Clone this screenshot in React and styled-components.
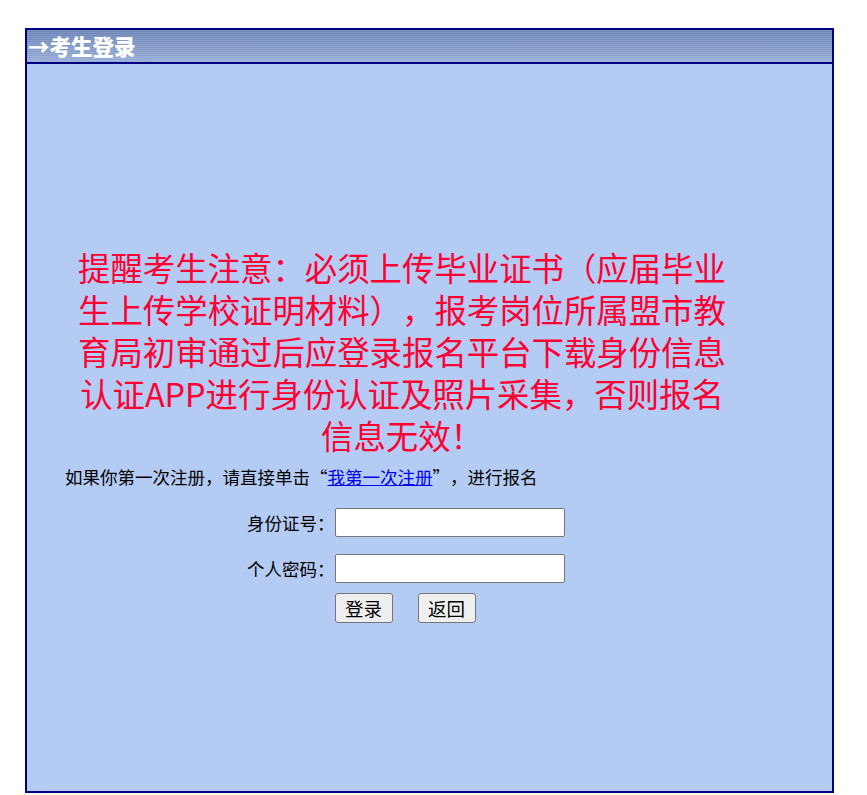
import React from 'react';
import styled, { createGlobalStyle } from 'styled-components';

const GlobalStyle = createGlobalStyle`
  html, body {
    margin: 0;
    padding: 0;
    background: #fff;
  }
  body {
    font-family: "Microsoft YaHei", "Noto Sans CJK SC", "Noto Sans", sans-serif;
    font-size: 17.5px;
    color: #000;
    text-spacing-trim: space-all;
  }
`;

const Page = styled.div`
  padding: 28px 0 0 25px;
`;

const Frame = styled.div`
  width: 809px;
  height: 765px;
  box-sizing: border-box;
  border: 2px solid #000080;
  display: flex;
  flex-direction: column;
  background: #b4cbf4;
`;

const Header = styled.div`
  height: 32px;
  border-bottom: 2px solid #000080;
  display: flex;
  align-items: center;
  padding-left: 1px;
  background:
    repeating-linear-gradient(
      to bottom,
      rgba(255, 255, 255, 0.08) 0px,
      rgba(255, 255, 255, 0.08) 1px,
      rgba(0, 0, 0, 0.04) 1px,
      rgba(0, 0, 0, 0.04) 2px
    ),
    linear-gradient(to bottom, #7089bb 0%, #8aa0cf 60%, #9db2dd 100%);
`;

const Title = styled.h1`
  margin: 0;
  font-size: 21.5px;
  font-weight: 900;
  color: #fff;
  line-height: 32px;
`;

const Body = styled.div`
  flex: 1;
  padding: 182px 0 0 38px;
`;

const Column = styled.div`
  width: 674px;
  display: flex;
  flex-direction: column;
`;

const Notice = styled.div`
  padding: 0 7px;
  font-size: 32.4px;
  line-height: 42px;
  color: #ff0033;
  text-align: center;
  word-break: break-all;
  text-spacing-trim: space-all;
`;

const Hint = styled.p`
  margin: 9px 0 0;
  font-size: 17.5px;
  line-height: 24px;
  font-feature-settings: "fwid";
  text-spacing-trim: space-all;
`;

const Link = styled.a`
  color: #0000ee;
  text-decoration: underline;
  cursor: pointer;
`;

const Form = styled.form`
  margin-top: 19px;
  padding-left: 7px;
  display: grid;
  grid-template-columns: 88px 230px;
  row-gap: 17px;
  justify-content: center;
  align-items: center;
`;

const Label = styled.label`
  text-align: right;
  white-space: nowrap;
  font-size: 17.5px;
  font-feature-settings: "fwid";
`;

const Input = styled.input`
  box-sizing: border-box;
  width: 230px;
  height: 29px;
  margin: 0;
  border: 1px solid #767676;
  border-radius: 2px;
  background: #fff;
  font-size: 16px;
  padding: 0 4px;
`;

const Actions = styled.div`
  grid-column: 2;
  margin-top: -7px;
  display: flex;
  gap: 25px;
`;

const Button = styled.button`
  box-sizing: border-box;
  width: 58px;
  height: 30px;
  margin: 0;
  padding: 0;
  border: 1px solid #767676;
  border-radius: 3px;
  background: #efefef;
  color: #000;
  font-family: inherit;
  font-size: 18.5px;
  cursor: pointer;
`;

function App() {
  return (
    <Page>
      <GlobalStyle />
      <Frame>
        <Header>
          <Title>→考生登录</Title>
        </Header>
        <Body>
          <Column>
            <Notice lang="zh-CN">
              提醒考生注意：必须上传毕业证书（应届毕业生上传学校证明材料），报考岗位所属盟市教育局初审通过后应登录报名平台下载身份信息认证APP进行身份认证及照片采集，否则报名信息无效！
            </Notice>
            <Hint lang="zh-CN">
              如果你第一次注册，请直接单击“<Link href="#">我第一次注册</Link>”，进行报名
            </Hint>
            <Form onSubmit={(e) => e.preventDefault()}>
              <Label htmlFor="idcard">身份证号：</Label>
              <Input id="idcard" type="text" />
              <Label htmlFor="pwd">个人密码：</Label>
              <Input id="pwd" type="password" />
              <Actions>
                <Button type="submit">登录</Button>
                <Button type="button">返回</Button>
              </Actions>
            </Form>
          </Column>
        </Body>
      </Frame>
    </Page>
  );
}

export default App;
